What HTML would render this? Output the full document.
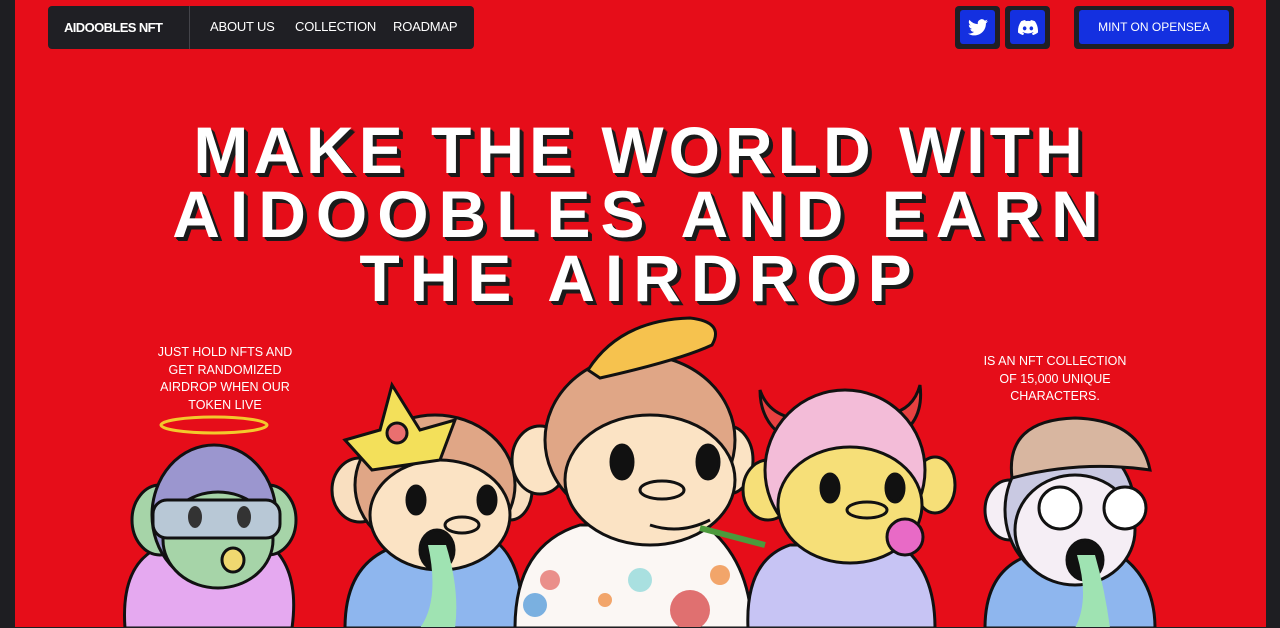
<!DOCTYPE html>
<html><head><meta charset="utf-8"><style>
*{margin:0;padding:0;box-sizing:border-box}
body{width:1280px;height:628px;overflow:hidden;background:#1e1e22;font-family:"Liberation Sans",sans-serif;position:relative}
.main{position:absolute;left:15px;top:0;width:1251px;height:627px;background:#e60d19;overflow:hidden}
.nav{position:absolute;left:33px;top:6px;width:426px;height:43px;background:#1f1f24;border-radius:4px;color:#fff}
.nav .brand{position:absolute;left:16px;top:14px;font-weight:900;font-size:13px;letter-spacing:-0.6px}
.nav .div{position:absolute;left:141px;top:0;width:1px;height:43px;background:#44444a}
.nav a{position:absolute;top:13px;font-size:13px;color:#fff;text-decoration:none;letter-spacing:-0.2px}
.btn{position:absolute;top:6px;height:43px;background:#1f1f24;border-radius:4px}
.btn .in{position:absolute;left:5px;top:4px;right:5px;bottom:5px;background:#1430e0;border-radius:3px;display:flex;align-items:center;justify-content:center;color:#fff;font-size:12px}
h1{position:absolute;left:0;width:1251px;top:118px;text-align:center;color:#fff;font-size:66px;font-weight:900;line-height:64px;text-shadow:4px 4px 0 #1a1a1a,3px 3px 0 #1a1a1a,2px 2px 0 #1a1a1a}
h1 span{display:block}
.cap{position:absolute;color:#fff;font-size:12.5px;text-align:center;line-height:17.5px}
</style></head><body>
<div class="main">
<div class="nav"><div class="brand">AIDOOBLES NFT</div><div class="div"></div>
<a style="left:162px">ABOUT US</a><a style="left:247px">COLLECTION</a><a style="left:345px">ROADMAP</a></div>
<div class="btn" style="left:940px;width:45px"><div class="in"><svg width="20" height="17" viewBox="0 0 24 20"><path fill="#fff" d="M24 2.4a10 10 0 0 1-2.8.8A5 5 0 0 0 23.3.5a10 10 0 0 1-3.1 1.2A4.9 4.9 0 0 0 11.8 6 14 14 0 0 1 1.7.9a4.9 4.9 0 0 0 1.5 6.6 4.9 4.9 0 0 1-2.2-.6 4.9 4.9 0 0 0 3.9 4.9 5 5 0 0 1-2.2.1 4.9 4.9 0 0 0 4.6 3.4A9.9 9.9 0 0 1 0 17.3 14 14 0 0 0 7.5 19.5c9 0 14-7.5 14-14v-.6A10 10 0 0 0 24 2.4z"/></svg></div></div>
<div class="btn" style="left:990px;width:45px"><div class="in"><svg width="20" height="15" viewBox="0 0 24 18"><path fill="#fff" d="M20.3 1.5A20 20 0 0 0 15.4 0l-.6 1.3a18 18 0 0 0-5.6 0L8.6 0a20 20 0 0 0-4.9 1.5C.6 6.2-.3 10.7.1 15.2a20 20 0 0 0 6 3l1.3-2.1a13 13 0 0 1-2-1l.5-.4a14 14 0 0 0 12.2 0l.5.4a13 13 0 0 1-2 1l1.3 2.1a20 20 0 0 0 6-3c.5-5.2-.8-9.7-3.6-13.7zM8 12.4c-1.2 0-2.2-1.1-2.2-2.4S6.8 7.6 8 7.6s2.2 1.1 2.2 2.4-1 2.4-2.2 2.4zm8 0c-1.2 0-2.2-1.1-2.2-2.4s1-2.4 2.2-2.4 2.2 1.1 2.2 2.4-1 2.4-2.2 2.4z"/></svg></div></div>
<div class="btn" style="left:1059px;width:160px"><div class="in">MINT ON OPENSEA</div></div>
<h1><span style="letter-spacing:5px">MAKE THE WORLD WITH</span><span style="letter-spacing:10px">AIDOOBLES AND EARN</span><span style="letter-spacing:10px">THE AIRDROP</span></h1>
<div class="cap" style="left:135px;top:344px;width:150px">JUST HOLD NFTS AND<br>GET RANDOMIZED<br>AIRDROP WHEN OUR<br>TOKEN LIVE</div>
<div class="cap" style="left:965px;top:353px;width:150px">IS AN NFT COLLECTION<br>OF 15,000 UNIQUE<br>CHARACTERS.</div>
<svg style="position:absolute;left:-15px;top:0" width="1280" height="628" stroke="#111" stroke-width="3">
<ellipse cx="214" cy="425" rx="53" ry="8" fill="none" stroke="#f3c92c"/>
<path d="M125 628 Q120 560 165 545 L270 545 Q300 570 292 628Z" fill="#e5a9f0"/>
<ellipse cx="160" cy="520" rx="28" ry="35" fill="#a6d4a8"/>
<ellipse cx="268" cy="520" rx="28" ry="35" fill="#a6d4a8"/>
<ellipse cx="214" cy="515" rx="62" ry="70" fill="#9b96cf"/>
<ellipse cx="218" cy="540" rx="55" ry="48" fill="#a6d4a8"/>
<rect x="153" y="500" width="127" height="38" rx="14" fill="#b8c8d6"/>
<ellipse cx="195" cy="517" rx="7" ry="11" fill="#333" stroke="none"/><ellipse cx="244" cy="517" rx="7" ry="11" fill="#333" stroke="none"/>
<ellipse cx="233" cy="560" rx="11" ry="12" fill="#f0d870"/>
<path d="M345 628 Q345 560 400 545 L500 545 Q525 570 522 628Z" fill="#8eb6ee"/>
<ellipse cx="360" cy="490" rx="28" ry="32" fill="#f9dfc0"/>
<ellipse cx="510" cy="490" rx="22" ry="30" fill="#f9dfc0"/>
<ellipse cx="435" cy="485" rx="80" ry="70" fill="#e0a686"/>
<ellipse cx="440" cy="515" rx="70" ry="55" fill="#fbe3c4"/>
<path d="M345 440 L380 430 L392 385 L420 430 L455 420 L440 460 L372 470Z" fill="#f3e05a"/>
<circle cx="397" cy="433" r="10" fill="#ea6f6f"/>
<ellipse cx="416" cy="500" rx="9" ry="14" fill="#111"/><ellipse cx="487" cy="500" rx="9" ry="14" fill="#111"/>
<ellipse cx="462" cy="525" rx="17" ry="8" fill="#fbe3c4"/>
<ellipse cx="437" cy="550" rx="17" ry="20" fill="#111"/>
<path d="M428 545 Q440 600 420 628 L455 628 Q460 590 446 545Z" fill="#9fe3b2" stroke="none"/>
<path d="M515 628 Q515 545 580 525 L705 525 Q750 560 752 628Z" fill="#fbf7f4"/>
<circle cx="550" cy="580" r="10" fill="#ea8f8a" stroke="none"/><circle cx="640" cy="580" r="12" fill="#a9e0e0" stroke="none"/><circle cx="690" cy="610" r="20" fill="#e07070" stroke="none"/><circle cx="605" cy="600" r="7" fill="#f2a56a" stroke="none"/><circle cx="720" cy="575" r="10" fill="#f2a56a" stroke="none"/><circle cx="535" cy="605" r="12" fill="#7ab0e0" stroke="none"/>
<ellipse cx="540" cy="460" rx="28" ry="34" fill="#fbe3c4"/>
<ellipse cx="728" cy="460" rx="25" ry="34" fill="#fbe3c4"/>
<ellipse cx="640" cy="440" rx="95" ry="85" fill="#e0a686"/>
<ellipse cx="650" cy="480" rx="85" ry="65" fill="#fbe3c4"/>
<path d="M588 370 Q620 320 690 318 Q725 322 712 345 Q680 360 600 378Z" fill="#f6c24e"/>
<ellipse cx="622" cy="462" rx="11" ry="17" fill="#111"/><ellipse cx="708" cy="462" rx="11" ry="17" fill="#111"/>
<ellipse cx="662" cy="490" rx="22" ry="9" fill="#fbe3c4"/>
<path d="M650 525 Q680 535 710 520" fill="none"/>
<path d="M700 528 L765 545" stroke="#4c9a3c" stroke-width="6"/>
<path d="M748 628 Q745 560 790 545 L900 545 Q935 570 935 628Z" fill="#c7c4f4"/>
<path d="M760 390 Q760 430 800 445 L810 420 Q770 420 760 390Z" fill="#e84040"/>
<path d="M920 385 Q925 425 890 440 L878 415 Q912 415 920 385Z" fill="#e84040"/>
<ellipse cx="768" cy="490" rx="25" ry="30" fill="#f6df78"/>
<ellipse cx="935" cy="485" rx="20" ry="28" fill="#f6df78"/>
<ellipse cx="845" cy="470" rx="80" ry="80" fill="#f3bcd8"/>
<ellipse cx="850" cy="505" rx="72" ry="58" fill="#f6df78"/>
<ellipse cx="830" cy="488" rx="9" ry="14" fill="#111"/><ellipse cx="895" cy="488" rx="9" ry="14" fill="#111"/>
<ellipse cx="867" cy="510" rx="20" ry="8" fill="#f6df78"/>
<circle cx="905" cy="537" r="18" fill="#e86ac6"/>
<path d="M985 628 Q985 570 1030 555 L1120 555 Q1155 580 1155 628Z" fill="#8eb6ee"/>
<ellipse cx="1010" cy="510" rx="25" ry="30" fill="#f5eef5"/>
<ellipse cx="1070" cy="510" rx="65" ry="72" fill="#c9c9e2"/>
<ellipse cx="1075" cy="530" rx="60" ry="55" fill="#f5eef5"/>
<path d="M1012 478 Q1005 420 1075 418 Q1140 420 1150 470 Q1080 460 1012 478Z" fill="#d8b6a0"/>
<circle cx="1060" cy="508" r="21" fill="#fff"/><circle cx="1125" cy="508" r="21" fill="#fff"/>
<ellipse cx="1085" cy="560" rx="18" ry="20" fill="#111"/>
<path d="M1077 555 Q1090 600 1075 628 L1110 628 Q1105 590 1095 555Z" fill="#9fe3b2" stroke="none"/>
</svg>
</div>
</body></html>
